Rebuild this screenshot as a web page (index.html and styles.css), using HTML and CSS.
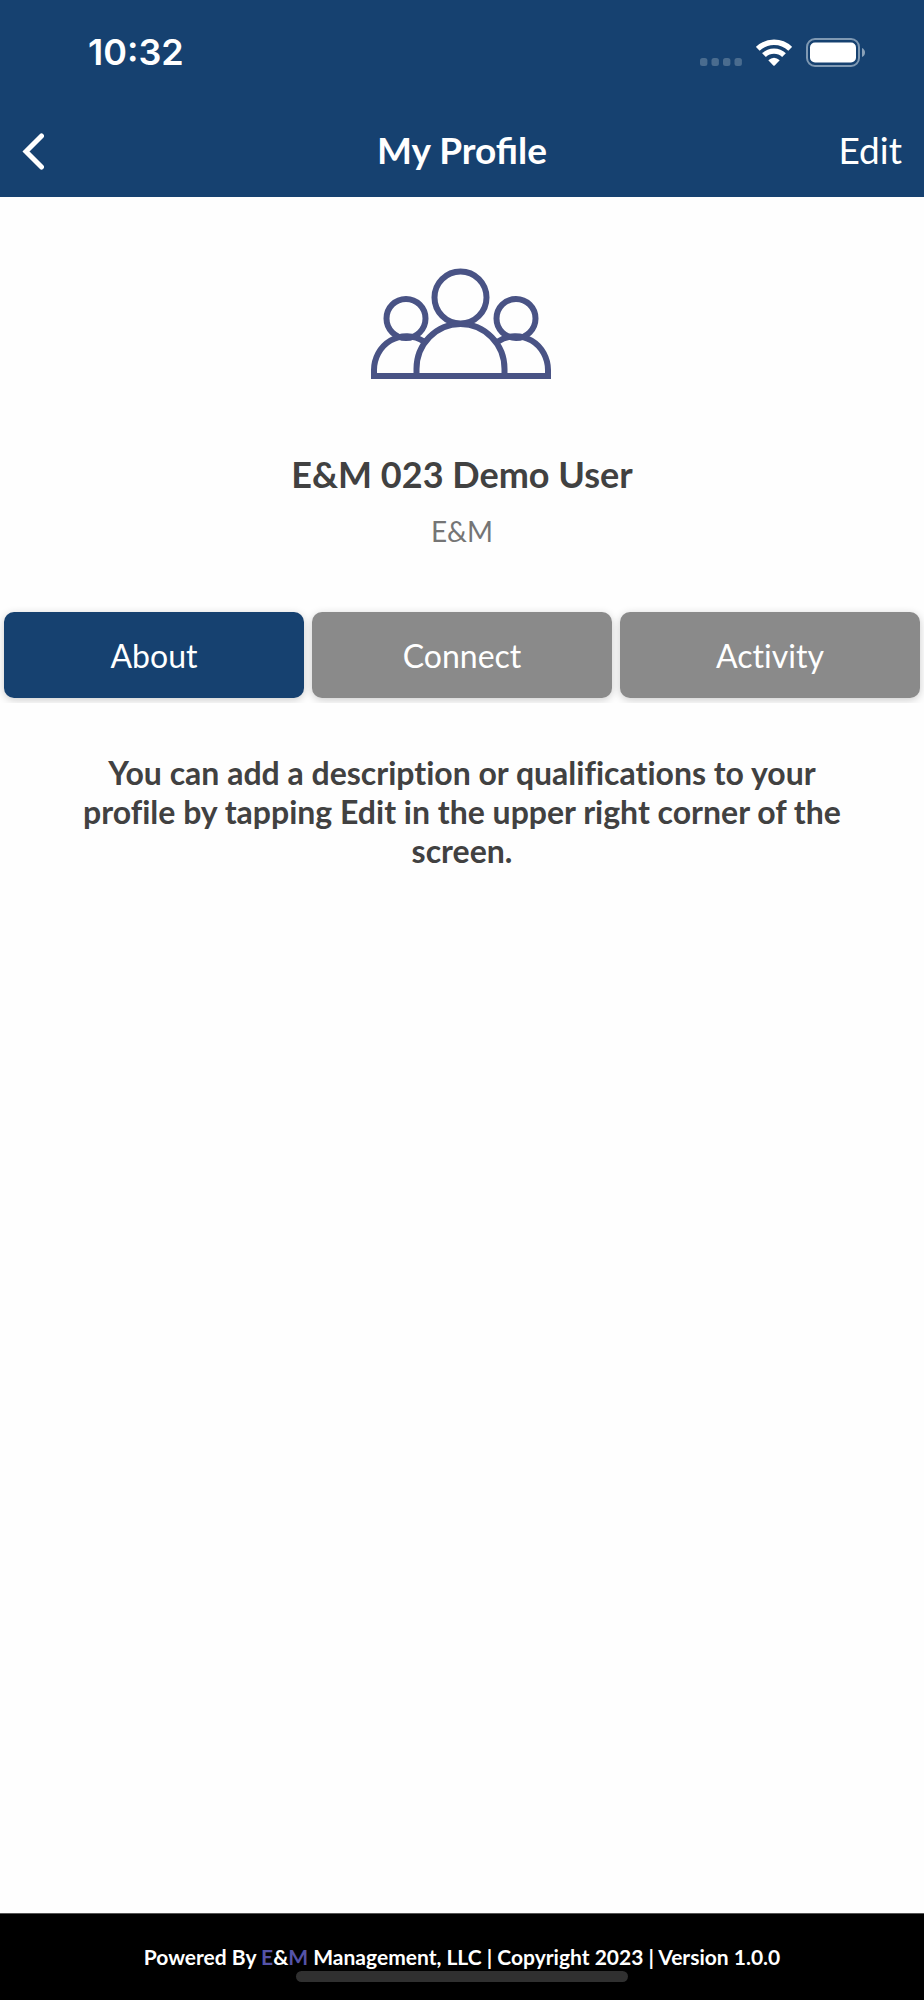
FILE: index.html
```html
<!DOCTYPE html>
<html lang="en">
<head>
<meta charset="utf-8">
<meta name="viewport" content="width=device-width, initial-scale=1">
<title>My Profile</title>
<link rel="stylesheet" href="styles.css">
</head>
<body>
<div class="app">
  <header class="top">
    <div class="status">
      <span class="time">10:32</span>
      <div class="status-icons">
        <svg class="signal" width="42" height="8" viewBox="0 0 42 8" fill="currentColor" aria-hidden="true">
          <rect width="7.4" height="8" rx="2.5"/><rect x="11.5" width="7.4" height="8" rx="2.5"/><rect x="23" width="7.4" height="8" rx="2.5"/><rect x="34.5" width="7.4" height="8" rx="2.5"/>
        </svg>
        <svg class="wifi" width="36" height="27" viewBox="0 0 36 27" aria-hidden="true">
          <g fill="none" stroke="#fff" stroke-width="5.4">
            <path d="M1.8 9.8A23.3 23.3 0 0 1 34.2 9.8"/>
            <path d="M8 16.1A14.5 14.5 0 0 1 28 16.1"/>
          </g>
          <path d="M12.3 21.3Q18 16 23.7 21.3L18.7 26.4Q18 27 17.3 26.4Z" fill="#fff"/>
        </svg>
        <svg class="battery" width="59" height="29" viewBox="0 0 59 29" aria-hidden="true">
          <rect x="1" y="1" width="52" height="27" rx="8" fill="none" stroke="#7f99b3" stroke-width="2"/>
          <rect x="4" y="4.5" width="46" height="20" rx="5" fill="#fff"/>
          <path d="M56 10Q59 11.5 59 14.5T56 19Z" fill="#8aa1b8"/>
        </svg>
      </div>
    </div>
    <nav class="nav">
      <button class="back" type="button" aria-label="Back">
        <svg width="22" height="37" viewBox="0 0 22 37" fill="none" stroke="currentColor" stroke-width="5" stroke-linecap="round" stroke-linejoin="miter" aria-hidden="true"><path d="M19.5 3L4 18.5L19.5 34"/></svg>
      </button>
      <h1 class="title">My Profile</h1>
      <button class="edit" type="button">Edit</button>
    </nav>
  </header>
  <main class="main">
    <section class="profile">
      <svg class="people" width="184" height="112" viewBox="0 0 184 112" fill="none" stroke="#495385" stroke-width="6" aria-hidden="true">
        <circle cx="90.5" cy="29.5" r="26"/>
        <circle cx="36" cy="50.5" r="19.5"/>
        <circle cx="146" cy="50.5" r="19.5"/>
        <path d="M46.5 108V101A44 45 0 0 1 134.5 101V108"/>
        <path d="M54 73.500A32.500 34 0 0 0 4 103V108H178V103A32.500 34 0 0 0 128 73.500"/>
      </svg>
      <h2 class="name">E&amp;M 023 Demo User</h2>
      <p class="org">E&amp;M</p>
    </section>
    <div class="tabs" role="tablist">
      <button class="tab tab-active" type="button" role="tab" aria-selected="true">About</button>
      <button class="tab" type="button" role="tab" aria-selected="false">Connect</button>
      <button class="tab" type="button" role="tab" aria-selected="false">Activity</button>
    </div>
    <p class="about">You can add a description or qualifications to your profile by tapping Edit in the upper right corner of the screen.</p>
  </main>
  <footer class="footer">
    <p class="legal">Powered By <span class="brand">E</span>&amp;<span class="brand">M</span> Management, LLC | Copyright 2023 | Version 1.0.0</p>
    <div class="home-bar"></div>
  </footer>
</div>
</body>
</html>
```
FILE: styles.css
```css
* {
  box-sizing: border-box;
}

body {
  margin: 0;
  background: #fefefe;
  color: #414141;
  font-family: Lato, sans-serif;
}

h1, h2, p {
  margin: 0;
}

button {
  padding: 0;
  border: 0;
  background: none;
  color: #fff;
  font-family: inherit;
}

.app {
  display: flex;
  flex-direction: column;
  min-height: 100vh;
}

.top {
  background: #164170;
  color: #fff;
}

.status {
  display: flex;
  align-items: center;
  justify-content: space-between;
  height: 106px;
  padding: 0 59px 2px 88px;
}

.time {
  font: 600 36px/44px Inter, sans-serif;
}

.status-icons {
  display: flex;
  align-items: center;
  gap: 14px;
}

.signal {
  align-self: flex-end;
  margin-bottom: 1px;
  color: #4a6c8f;
}

.nav {
  display: grid;
  grid-template-columns: 1fr auto 1fr;
  align-items: center;
  height: 91px;
  padding: 0 22px;
}

.back {
  display: flex;
  justify-self: start;
}

.title {
  padding-bottom: 4px;
  font-size: 37px;
  line-height: 44px;
  font-weight: 700;
}

.edit {
  justify-self: end;
  padding-bottom: 4px;
  font-size: 37px;
  line-height: 44px;
}

.main {
  flex: 1;
}

.profile {
  display: flex;
  flex-direction: column;
  align-items: center;
  padding: 71px 24px 56px;
}

.name {
  margin-top: 72px;
  font-size: 36px;
  line-height: 44px;
  font-weight: 700;
}

.org {
  margin-top: 18px;
  color: #757575;
  font-size: 28px;
  line-height: 34px;
}

.tabs {
  display: grid;
  grid-template-columns: repeat(3, 1fr);
  gap: 8px;
  padding: 12px 4px 5px;
  margin-top: -4px;
  overflow: hidden;
}

.tab {
  height: 86px;
  border-radius: 10px;
  background: #8a8a8a;
  box-shadow: 0 2px 8px rgba(0, 0, 0, 0.2);
  font-size: 32px;
  font-variant-ligatures: no-common-ligatures;
}

.tab-active {
  background: #164170;
}

.about {
  padding: 50px 72px;
  text-align: center;
  font-size: 32px;
  line-height: 39px;
  font-weight: 700;
  font-variant-ligatures: no-common-ligatures;
}

.footer {
  display: flex;
  flex-direction: column;
  align-items: center;
  padding: 29px 0 18px;
  border-top: 1px solid #555;
  background: #000;
  color: #fff;
}

.legal {
  padding: 0 16px;
  font-size: 21px;
  line-height: 28px;
  font-weight: 700;
}

.brand {
  color: #5553a8;
}

.home-bar {
  width: 36%;
  height: 11px;
  border-radius: 6px;
  background: #303030;
}
```
